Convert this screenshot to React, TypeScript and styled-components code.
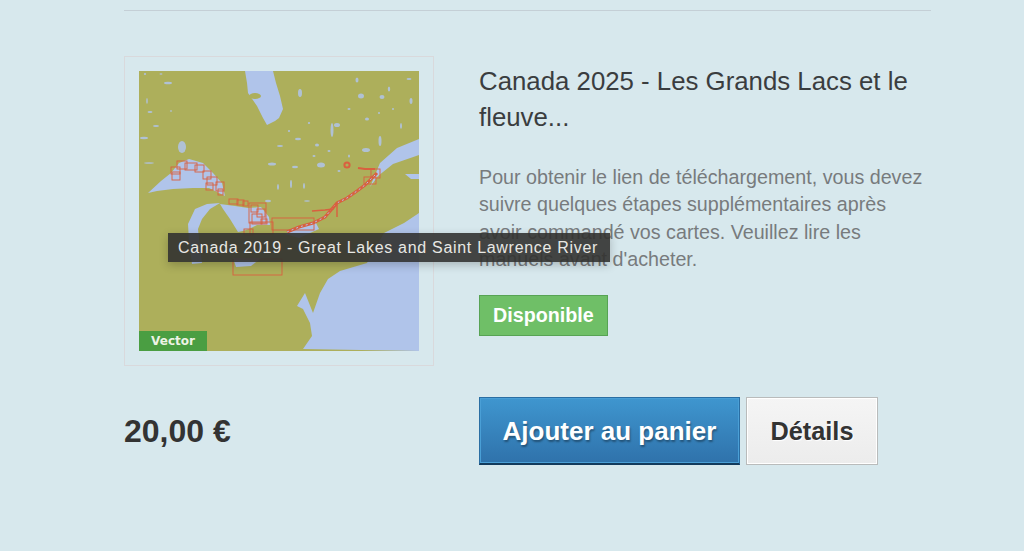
import React from "react";
import styled, { createGlobalStyle } from "styled-components";

const WATER = "#b0c4ea";
const LAND = "#adaf5b";
const CHART = "#d9603f";

const waterShapes = [
  // Hudson / James Bay
  "106,0 134,0 137,12 141,25 144,38 140,47 136,50 128,54 124,47 118,35 109,22 108,12",
  // Superior
  "9,122 22,110 32,102 40,92 50,88 64,92 74,102 83,112 86,125 70,117 54,117 34,118 18,120",
  // Michigan
  "49,153 56,138 68,133 81,132 71,138 63,148 59,158 61,178 63,192 53,193 50,170",
  // Huron + Georgian Bay
  "81,133 96,135 109,137 122,136 130,146 131,154 118,154 110,158 104,160 99,161 91,148 84,138",
  // Erie
  "94,187 122,187 112,195 97,196",
  // Ontario
  "146,163 164,155 176,150 180,158 160,167",
  // St Lawrence + gulf
  "231,116 241,92 258,77 280,68 280,84 254,93 239,105",
  "266,103 280,103 280,108 272,108",
  // Atlantic
  "164,278 173,265 171,252 164,238 158,235 166,222 174,242 181,222 189,208 201,200 228,192 245,162 265,152 280,142 280,280",
];

const lakes: [number, number, number, number][] = [
  [43, 76, 4, 6], [29, 12, 4, 1.3], [6, 3, 1.2, 1], [161, 22, 2, 4], [222, 25, 3, 2.5], [243, 26, 2.5, 2],
  [272, 30, 1.5, 3], [193, 59, 1.5, 7], [198, 54, 3, 2], [228, 48, 2, 1.5], [241, 70, 1.5, 5], [227, 79, 4, 2], [182, 94, 4, 2.5],
  [133, 93, 4, 1.5], [156, 96, 3, 1.2], [141, 75, 3, 1], [159, 68, 3, 1.3], [178, 74, 2, 1.5], [139, 116, 1, 3],
  [152, 113, 1, 4], [165, 115, 1, 3], [11, 41, 2.5, 1], [17, 55, 3, 1], [5, 67, 4, 1.2], [10, 92, 5, 0.8],
  [262, 55, 1, 3], [210, 38, 1.5, 1], [218, 9, 1.5, 2.5], [250, 18, 1.2, 2.5], [270, 8, 2.5, 1], [22, 3, 1.5, 0.8],
  [129, 130, 3, 1.2], [168, 130, 3, 0.8], [8, 30, 0.8, 3], [200, 100, 1.5, 1], [240, 42, 1, 1], [254, 38, 1, 1],
  [175, 85, 1.5, 1], [190, 80, 1.5, 1], [210, 85, 1, 1.5], [150, 60, 1.2, 1], [170, 52, 1.2, 1], [32, 40, 1.2, 0.8],
];

const chartRects = [
  [38, 90, 10, 8], [46, 92, 12, 7], [56, 94, 9, 7], [32, 96, 9, 7], [33, 101, 8, 8], [64, 100, 8, 8], [68, 106, 10, 8],
  [67, 112, 7, 7], [77, 111, 8, 9], [79, 118, 5, 6], [90, 128, 9, 5], [98, 129, 7, 5], [104, 130, 5, 5],
  [110, 132, 17, 20], [112, 134, 7, 7], [118, 138, 8, 8], [113, 143, 10, 10], [122, 148, 6, 5], [133, 147, 42, 12],
  [111, 151, 23, 12], [105, 158, 9, 6], [94, 188, 49, 16], [225, 106, 12, 7], [232, 98, 9, 9],
];

const chartLine = "148,161 160,156 174,152 186,146 198,132 208,127 218,120 226,114 238,102";

function ChartMap() {
  return (
    <MapSvg viewBox="0 0 280 280" aria-hidden="true">
      <rect width="280" height="280" fill={LAND} />
      {waterShapes.map((p) => (
        <polygon key={p} points={p} fill={WATER} />
      ))}
      <ellipse cx="116" cy="25" rx="6" ry="3" fill={LAND} />
      {lakes.map(([cx, cy, rx, ry]) => (
        <ellipse key={`${cx}-${cy}`} cx={cx} cy={cy} rx={rx} ry={ry} fill={WATER} opacity="0.85" />
      ))}
      <g fill="none" stroke={CHART} strokeWidth="0.9">
        {chartRects.map(([x, y, w, h]) => (
          <rect key={`${x}-${y}`} x={x} y={y} width={w} height={h} />
        ))}
        <polyline points={chartLine} strokeWidth="3" />
        <polyline points={chartLine} strokeWidth="1" stroke={WATER} strokeDasharray="2 3" />
        <polyline points="173,140 186,139 194,138 198,132 198,146" strokeWidth="1.4" />
        <circle cx="208" cy="94" r="2.6" strokeWidth="2" />
        <polyline points="219,97 226,98 236,98" strokeWidth="1.8" />
      </g>
    </MapSvg>
  );
}

export default function App() {
  return (
    <>
      <GlobalStyle />
      <Page>
        <Rule />
        <ProductRow>
          <Thumb>
            <ChartMap />
            <VectorTag>Vector</VectorTag>
          </Thumb>
          <Info>
            <Title>Canada 2025 - Les Grands Lacs et le fleuve...</Title>
            <Description>
              Pour obtenir le lien de téléchargement, vous devez suivre quelques
              étapes supplémentaires après avoir commandé vos cartes. Veuillez
              lire les manuels avant d'acheter.
            </Description>
            <Stock>Disponible</Stock>
          </Info>
          <Tooltip>Canada 2019 - Great Lakes and Saint Lawrence River</Tooltip>
        </ProductRow>
        <BuyRow>
          <Price>20,00 €</Price>
          <Actions>
            <AddButton type="button">Ajouter au panier</AddButton>
            <DetailsButton type="button">Détails</DetailsButton>
          </Actions>
        </BuyRow>
      </Page>
    </>
  );
}

const GlobalStyle = createGlobalStyle`
  html, body {
    margin: 0;
    height: 100%;
    background: #d7e8ed;
    overflow: hidden;
  }
  body {
    font-family: "Liberation Sans", Arial, sans-serif;
  }
`;

const Page = styled.div`
  box-sizing: border-box;
  width: 1024px;
  height: 551px;
  padding: 10px 93px 0 124px;
`;

const Rule = styled.div`
  height: 1px;
  background: #c4cfd6;
`;

const ProductRow = styled.div`
  position: relative;
  display: grid;
  grid-template-columns: 310px 1fr;
  column-gap: 45px;
  margin-top: 45px;
`;

const Thumb = styled.div`
  position: relative;
  box-sizing: border-box;
  width: 310px;
  height: 310px;
  padding: 14px;
  border: 1px solid #d9d9dc;
`;

const MapSvg = styled.svg`
  display: block;
  width: 280px;
  height: 280px;
  filter: blur(0.4px);
`;

const VectorTag = styled.span`
  position: absolute;
  left: 14px;
  bottom: 14px;
  width: 68px;
  height: 20px;
  background: #4a9e42;
  color: #eef3e6;
  font: 700 12px/20px "DejaVu Sans", sans-serif;
  text-align: center;
`;

const Info = styled.div`
  display: flex;
  flex-direction: column;
  align-items: flex-start;
`;

const Title = styled.h2`
  margin: 7px 0 0;
  color: #3a3d3f;
  font-size: 25.8px;
  font-weight: 400;
  line-height: 36px;
`;

const Description = styled.p`
  margin: 29px 0 0;
  color: #777b7d;
  font-size: 19.7px;
  line-height: 27.4px;
`;

const Stock = styled.div`
  box-sizing: border-box;
  height: 41px;
  margin-top: 21px;
  padding: 0 13px;
  border: 1px solid #57a354;
  background: #6fbf67;
  color: #fff;
  font-size: 19.7px;
  font-weight: 700;
  line-height: 39px;
`;

const Tooltip = styled.div`
  position: absolute;
  left: 44px;
  top: 177px;
  box-sizing: border-box;
  height: 29px;
  padding: 0 12px 0 10px;
  background: rgba(50, 50, 48, 0.9);
  box-shadow: 0 3px 10px rgba(0, 0, 0, 0.22);
  color: #e8e8e4;
  font-size: 16px;
  letter-spacing: 0.7px;
  line-height: 29px;
  white-space: nowrap;
`;

const BuyRow = styled.div`
  display: grid;
  grid-template-columns: 310px 1fr;
  column-gap: 45px;
  align-items: center;
  margin-top: 31px;
`;

const Price = styled.div`
  color: #333;
  font-size: 32px;
  font-weight: 700;
`;

const Actions = styled.div`
  display: flex;
  gap: 6px;
`;

const BaseButton = styled.button`
  box-sizing: border-box;
  height: 68px;
  font-family: inherit;
  font-weight: 700;
  cursor: pointer;
`;

const AddButton = styled(BaseButton)`
  width: 261px;
  padding: 2px 0 0;
  border: 1px solid #2a6ea3;
  border-bottom: 2px solid #123a5c;
  background: linear-gradient(#3f96cf, #2f72ab);
  box-shadow: inset 0 0 0 1px #4a9fd6;
  color: #fff;
  font-size: 26px;
  text-shadow: 1px 2px 2px rgba(0, 0, 0, 0.35);
`;

const DetailsButton = styled(BaseButton)`
  width: 132px;
  padding: 0;
  border: 1px solid #b9bbbb;
  background: linear-gradient(#f5f5f5, #ececec);
  box-shadow: inset 0 0 0 1px #fff;
  color: #333;
  font-size: 25.3px;
  text-shadow: 1px 1px 1px #fff;
`;
